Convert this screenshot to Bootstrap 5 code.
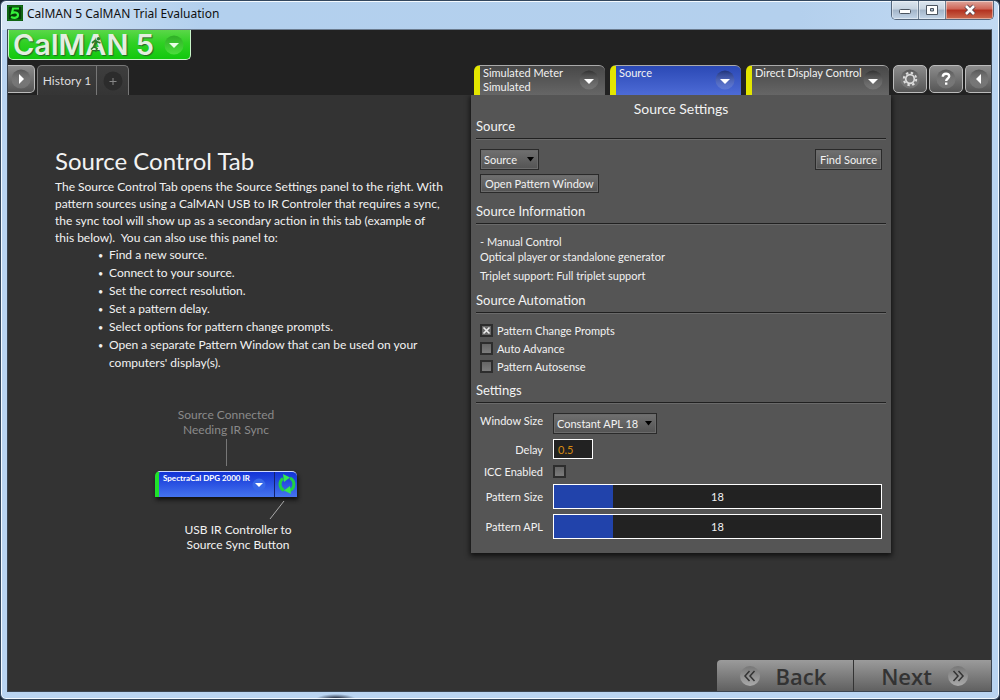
<!DOCTYPE html>
<html lang="en">
<head>
<meta charset="utf-8">
<meta name="viewport" content="width=device-width, initial-scale=1">
<title>CalMAN 5 CalMAN Trial Evaluation</title>
<link href="https://cdn.jsdelivr.net/npm/bootstrap@5.3.0/dist/css/bootstrap.min.css" rel="stylesheet">
<style>
  body { font-family: Lato, "Liberation Sans", sans-serif; font-size: 11px; line-height: 15px; color: #f2f2f2; background: #1c2634; }
  button, select, input { font: inherit; color: inherit; }
  .app-window { border: 1px solid #33475e; border-radius: 6px; padding: 0 7px 7px 6px; box-shadow: inset 0 0 0 1px #f4faff;
    background: radial-gradient(ellipse 20px 5px at 335px 100%, #3b475c 30%, transparent), linear-gradient(90deg, #d6e5f4, #b3d0ee 20%, #b4d0ed 80%, #c2daf3) 0 0 / 100% 29px no-repeat, #b9d4f1; }
  .title-bar { height: 28px; color: #101010; font-family: "Noto Sans", sans-serif; font-size: 12px; }
  .win-buttons { margin-right: -2px; border: 1px solid #55677c; border-top: 0; border-radius: 0 0 5px 5px; overflow: hidden; height: 19px; }
  .win-buttons button { width: 27px; border: 0; border-right: 1px solid #6c7d90; padding: 0; background: linear-gradient(#dce6ef, #c6d3e0 45%, #a3b5c9 50%, #c3d5e8); box-shadow: inset 0 0 0 1px #ffffff70; }
  .win-buttons .win-close { width: 47px; border-right: 0; background: linear-gradient(#dfa69c, #cf6455 45%, #b3301f 50%, #cb6a4e); }
  .client { border: 1px solid #3c4550; border-top-color: #6d7d90; background: #333; }
  .top-area { background: #222; }
  .logo-button { width: 183px; height: 30px; border: 1px solid #c9f5c9; border-top: 0; border-radius: 0 0 5px 5px; padding: 0 6px 0 4px; background: linear-gradient(#5bd749, #2fd023 45%, #11c80d); }
  .logo-text { font-family: Inter, sans-serif; font-weight: 600; font-size: 29px; line-height: 26px; color: #e4eee0; text-shadow: 1px 1px 1px #28622a; }
  .logo-text svg { position: absolute; left: 76px; top: 4px; }
  .tool-row { margin-top: 5px; height: 30px; }
  .sq-button { width: 34px; height: 28px; padding: 0; border: 1px solid #bbb; border-radius: 5px; background: linear-gradient(#8c8c8c, #555); }
  .sq-left { width: 27px; border-left: 0; border-radius: 0 5px 5px 0; }
  .sq-right { width: 26px; border-right: 0; border-radius: 5px 0 0 5px; }
  .history { margin-left: 2px; border: 1px solid #777; border-bottom: 0; border-radius: 5px 5px 0 0; background: linear-gradient(#3e3e3e, #353535); overflow: hidden; }
  .history button { border: 0; background: none; padding: 0; color: #ddd; font-size: 12px; }
  .history .hist-name { width: 58px; }
  .history .hist-add { width: 32px; border-left: 1px solid #777; }
  .device-tab { width: 131px; margin-right: 5px; border: 0; border-left: 6px solid #e3e600; border-top: 1px solid #aaa; border-radius: 6px 6px 0 0; padding: 0 6px 0 3px; background: linear-gradient(#484848, #666); text-align: left; line-height: 14px; }
  .device-tab.current { background: linear-gradient(#2b49b5, #4d6bd6); }
  .device-tab.wide { width: 143px; margin-right: 4px; }
  .tab-label { white-space: nowrap; }
  .main-area { min-height: 565px; }
  .intro { padding: 51px 0 0 47px; white-space: nowrap; font-size: 12px; line-height: 17px; }
  .intro h1 { font-size: 24px; line-height: 30px; margin: 0 0 2px; font-weight: 400; }
  .intro ul { line-height: 18px; padding-left: 54px; margin: 0; list-style: none; }
  .intro li::before { content: "•"; display: inline-block; width: 11px; margin-left: -11px; font-size: 9px; line-height: 9px; }
  .intro p { margin: 0; }
  .figure-box { width: 142px; margin: 35px 0 0 100px; line-height: 15px; font-size: 12px; }
  .figure-box svg { display: block; }
  .dim-label { color: #8a8a8a; }
  .ir-tab { height: 26px; border: 0; border-left: 4px solid #1fe12b; border-top: 1px solid #cfd8ff; border-radius: 5px 5px 0 0; background: linear-gradient(#1233d6, #4574ef); box-shadow: 1px 3px 4px #111; font-size: 8px; line-height: 12px; font-weight: 700; }
  .ir-sync { width: 23px; border-left: 1px solid #14236e; }
  .settings-panel { flex: 0 1 420px; margin-right: 100px; padding: 6px 5px 14px; background: #555; box-shadow: 0 2px 5px 1px #111; clip-path: inset(0 -8px -8px -8px); }
  .panel-title { font-size: 14px; line-height: 16px; margin: 0; font-weight: 400; }
  .group-title { font-size: 13px; line-height: 18px; margin: 0; padding-bottom: 3px; border-bottom: 1px solid #202020; box-shadow: 0 1px 0 #6a6a6a; font-weight: 400; }
  .group-body { padding: 10px 4px 9px; }
  .info-body { padding-bottom: 8px; }
  .auto-body { padding: 8px 4px 6px; }
  .flat-button, .flat-select { border: 1px solid #2a2a2a; border-radius: 0; padding: 0 4px; height: 21px; background: linear-gradient(#707070, #545454); box-shadow: inset 0 0 0 1px #6b6b6b; }
  .flat-select { appearance: none; padding: 0 3px; background: url("data:image/svg+xml,%3Csvg xmlns='http://www.w3.org/2000/svg' width='7' height='5'%3E%3Cpath d='M0 0h7L3.500 4.500z'/%3E%3C/svg%3E") right 4px center no-repeat, linear-gradient(#707070, #545454); }
  .flat-button.short { height: 19px; line-height: 17px; }
  .tick { appearance: none; width: 13px; height: 13px; margin: 0; border: 2px solid #2d2d2d; background: linear-gradient(#656565, #7c7c7c); }
  .tick:checked { background: url("data:image/svg+xml,%3Csvg xmlns='http://www.w3.org/2000/svg' width='9' height='9'%3E%3Cpath d='M1.500 1.500l6 6m0-6l-6 6' stroke='%23eee' stroke-width='1.600'/%3E%3C/svg%3E") center no-repeat, #686868; }
  .tick-row { height: 18px; }
  .settings-grid { display: grid; grid-template-columns: 63px minmax(0, 1fr); column-gap: 10px; row-gap: 5px; align-items: center; justify-items: start; }
  .settings-grid > label { justify-self: end; white-space: nowrap; }
  .settings-grid > label:first-child { align-self: start; }
  .delay-box { width: 40px; height: 20px; border: 1px solid #fff; background: #222; color: #d58a12; padding: 0 4px; }
  .bar-box { width: 100%; height: 25px; }
  .bar-box input { appearance: none; display: block; width: 100%; height: 25px; margin: 0; border: 1px solid #fff; background: linear-gradient(90deg, #2143ab var(--fill), #222 var(--fill)); }
  .bar-box input::-webkit-slider-thumb { appearance: none; width: 1px; height: 23px; background: transparent; }
  .bar-box output { position: absolute; inset: 0; display: grid; place-items: center; pointer-events: none; }
  .nav-buttons button { width: 137px; height: 31px; border: 0; padding: 0; font-family: "Open Sans", sans-serif; font-weight: 600; font-size: 22px; line-height: 28px; color: #333; background: linear-gradient(#9b9b9b, #606060); }
  .nav-buttons button:first-child { border-right: 1px solid #333; border-radius: 4px 0 0 0; }
</style>
</head>
<body>
<svg width="0" height="0" class="position-absolute" aria-hidden="true">
  <defs>
    <linearGradient id="disc" x1="0" y1="0" x2="0" y2="1"><stop offset="0" stop-color="#000" stop-opacity=".35"/><stop offset="1" stop-color="#fff" stop-opacity=".12"/></linearGradient>
    <linearGradient id="discLight" x1="0" y1="0" x2="0" y2="1"><stop offset="0" stop-color="#777"/><stop offset="1" stop-color="#aaa"/></linearGradient>
    <linearGradient id="discGreen" x1="0" y1="0" x2="0" y2="1"><stop offset="0" stop-color="#2fae26"/><stop offset="1" stop-color="#4ade3c"/></linearGradient>
    <symbol id="down" viewBox="0 0 20 20"><circle cx="10" cy="10" r="9.500" fill="url(#disc)"/><path d="M5 9h10l-5 5z" fill="#fff"/></symbol>
  </defs>
</svg>
<div class="app-window min-vh-100 d-flex flex-column">
  <header class="title-bar d-flex justify-content-between align-items-start">
    <div class="d-flex align-items-center gap-1 pt-1">
      <svg width="16" height="16"><rect width="16" height="16" fill="#063d08"/><rect x="1" y="1" width="14" height="14" fill="none" stroke="#1a8f1c"/><path d="M12 3.500H6L5 8c2-1 6-1 6 2 0 3-4 3.500-7 2" fill="none" stroke="#35f03a" stroke-width="2.200"/></svg>
      <span>CalMAN 5 CalMAN Trial Evaluation</span>
    </div>
    <div class="win-buttons d-flex">
      <button aria-label="Minimize"><svg width="14" height="14" class="d-block mx-auto"><rect x="1.500" y="6.500" width="11" height="4" rx="1" fill="#fff" stroke="#4c5560"/></svg></button>
      <button aria-label="Maximize"><svg width="14" height="14" class="d-block mx-auto"><path fill-rule="evenodd" d="M1.500 2.500h11v9h-11zM5.500 5.500h3v2.500h-3z" fill="#fff" stroke="#4c5560"/></svg></button>
      <button class="win-close" aria-label="Close"><svg width="14" height="14" class="d-block mx-auto"><path d="M3 3l8 8m0-8l-8 8" stroke="#574049" stroke-width="4.500"/><path d="M3 3l8 8m0-8l-8 8" stroke="#fff" stroke-width="2.600"/></svg></button>
    </div>
  </header>
  <div class="client flex-grow-1 d-flex flex-column">
    <div class="top-area">
      <button class="logo-button d-flex justify-content-between align-items-center">
        <span class="logo-text position-relative">CalMAN 5<svg width="14" height="17"><path d="M8.500 5L5 10.500l3 2-1.500 3.500M5 10.500L2 13.500M3 7l3-2.500 3 1.500 2.500 1" fill="none" stroke="#2d7a2c" stroke-width="1.700"/><circle cx="9.500" cy="2.800" r="1.700" fill="#2d7a2c"/></svg></span>
        <svg width="20" height="20"><circle cx="10" cy="10" r="9.500" fill="url(#discGreen)"/><path d="M5 8h10l-5 5z" fill="#e8ffe5"/></svg>
      </button>
      <div class="tool-row d-flex justify-content-between">
        <div class="d-flex">
          <button class="sq-button sq-left" aria-label="Expand"><svg width="20" height="20" class="d-block mx-auto"><circle cx="10" cy="10" r="9.500" fill="url(#disc)"/><path d="M8 5v10l5-5z" fill="#fff"/></svg></button>
          <div class="history d-flex">
            <button class="hist-name">History 1</button>
            <button class="hist-add" aria-label="Add history"><svg width="20" height="20"><circle cx="10" cy="10" r="9.500" fill="#2c2c2c"/><path d="M10 7v7M6.500 10.500h7" stroke="#888"/></svg></button>
          </div>
        </div>
        <div class="d-flex">
          <button class="device-tab d-flex justify-content-between"><span class="tab-label">Simulated Meter<br>Simulated</span><svg width="20" height="20" class="mt-1 flex-shrink-0"><use href="#down"/></svg></button>
          <button class="device-tab current d-flex justify-content-between"><span class="tab-label">Source</span><svg width="20" height="20" class="mt-1 flex-shrink-0"><use href="#down"/></svg></button>
          <button class="device-tab wide d-flex justify-content-between"><span class="tab-label">Direct Display Control</span><svg width="20" height="20" class="mt-1 flex-shrink-0"><use href="#down"/></svg></button>
          <div class="d-flex" style="gap:2px">
            <button class="sq-button" aria-label="Options"><svg width="20" height="20" class="d-block mx-auto"><circle cx="10" cy="10" r="9.500" fill="url(#disc)"/><circle cx="10" cy="10" r="4.300" fill="none" stroke="#ddd" stroke-width="1.700"/><circle cx="10" cy="10" r="6.200" fill="none" stroke="#ddd" stroke-width="2" stroke-dasharray="2.400 2.470"/></svg></button>
            <button class="sq-button" aria-label="Help"><svg width="20" height="20" class="d-block mx-auto"><circle cx="10" cy="10" r="9.500" fill="url(#disc)"/><path d="M6.800 7.800c0-4 6.400-4 6.400-.5 0 2.200-3 2.200-3 4.700M10.200 13.500v2.300" fill="none" stroke="#fff" stroke-width="2.400"/></svg></button>
            <button class="sq-button sq-right" aria-label="Collapse"><svg width="20" height="20" class="d-block mx-auto"><circle cx="10" cy="10" r="9.500" fill="url(#disc)"/><path d="M12 5v10l-5-5z" fill="#fff"/></svg></button>
          </div>
        </div>
      </div>
    </div>
    <main class="main-area d-flex justify-content-between align-items-start">
      <section class="intro">
        <h1>Source Control Tab</h1>
        <p>The Source Control Tab opens the Source Settings panel to the right. With<br>pattern sources using a CalMAN USB to IR Controler that requires a sync,<br>the sync tool will show up as a secondary action in this tab (example of<br>this below).&nbsp; You can also use this panel to:</p>
        <ul>
          <li>Find a new source.</li>
          <li>Connect to your source.</li>
          <li>Set the correct resolution.</li>
          <li>Set a pattern delay.</li>
          <li>Select options for pattern change prompts.</li>
          <li>Open a separate Pattern Window that can be used on your<br>computers' display(s).</li>
        </ul>
        <div class="figure-box text-center">
          <div class="dim-label">Source Connected<br>Needing IR Sync</div>
          <svg width="142" height="34"><path d="M71.500 2v27" stroke="#777"/></svg>
          <button class="ir-tab d-flex w-100 p-0 text-white">
            <span class="flex-grow-1 text-start ps-1">SpectraCal DPG 2000 IR</span>
            <svg width="14" height="14" class="align-self-center"><circle cx="7" cy="7" r="6.500" fill="#3767e8"/><path d="M3 5h8L7 9z" fill="#fff"/></svg>
            <span class="ir-sync ms-2 h-100"><svg width="22" height="24"><g fill="none" stroke="#20d044" stroke-width="3"><path d="M9 18.500A7 7 0 0 1 8 6.500M15 6a7 7 0 0 1 0 12.500"/></g><path d="M8 2l7 3.500L9 10zM16 22l-7-3.500 6-4.500z" fill="#35e84f"/></svg></span>
          </button>
          <svg width="142" height="25"><path d="M129 4l-14 18" stroke="#aaa"/></svg>
          <div class="ps-4 text-nowrap d-flex justify-content-center"><span>USB IR Controller to<br>Source Sync Button</span></div>
        </div>
      </section>
      <section class="settings-panel">
        <h2 class="panel-title text-center">Source Settings</h2>
        <h3 class="group-title">Source</h3>
        <div class="group-body">
          <div class="d-flex justify-content-between mb-1">
            <select class="flat-select" style="width:59px" aria-label="Source"><option>Source</option></select>
            <button class="flat-button">Find Source</button>
          </div>
          <button class="flat-button short d-block">Open Pattern Window</button>
        </div>
        <h3 class="group-title">Source Information</h3>
        <div class="group-body info-body">
          <p class="mb-1">- Manual Control<br>Optical player or standalone generator</p>
          <p class="m-0">Triplet support: Full triplet support</p>
        </div>
        <h3 class="group-title">Source Automation</h3>
        <div class="group-body auto-body">
          <div class="tick-row d-flex align-items-center gap-1"><input class="tick" type="checkbox" id="prompts" checked><label for="prompts">Pattern Change Prompts</label></div>
          <div class="tick-row d-flex align-items-center gap-1"><input class="tick" type="checkbox" id="advance"><label for="advance">Auto Advance</label></div>
          <div class="tick-row d-flex align-items-center gap-1"><input class="tick" type="checkbox" id="autosense"><label for="autosense">Pattern Autosense</label></div>
        </div>
        <h3 class="group-title">Settings</h3>
        <div class="group-body settings-grid pb-0">
          <label for="winsize">Window Size</label><select class="flat-select" id="winsize" style="width:104px"><option>Constant APL 18</option></select>
          <label for="delay">Delay</label><input class="delay-box" id="delay" type="text" value="0.5">
          <label for="icc">ICC Enabled</label><input class="tick" id="icc" type="checkbox">
          <label for="psize">Pattern Size</label><div class="bar-box position-relative"><input id="psize" type="range" value="18" style="--fill:18%"><output for="psize">18</output></div>
          <label for="papl">Pattern APL</label><div class="bar-box position-relative"><input id="papl" type="range" value="18" style="--fill:18%"><output for="papl">18</output></div>
        </div>
      </section>
    </main>
    <footer class="nav-buttons d-flex justify-content-end mt-auto">
      <button class="d-flex align-items-center justify-content-center gap-3 pe-1"><svg width="20" height="20"><circle cx="10" cy="10" r="10" fill="url(#discLight)"/><path d="M9.500 5L5 10l4.500 5M14.500 5L10 10l4.500 5" fill="none" stroke="#333" stroke-width="1.500"/></svg>Back</button>
      <button class="d-flex align-items-center justify-content-center gap-3 ps-1">Next<svg width="20" height="20"><circle cx="10" cy="10" r="10" fill="url(#discLight)"/><path d="M5.500 5l4.500 5-4.500 5M10.500 5l4.500 5-4.500 5" fill="none" stroke="#333" stroke-width="1.500"/></svg></button>
    </footer>
  </div>
</div>
<script src="https://cdn.jsdelivr.net/npm/bootstrap@5.3.0/dist/js/bootstrap.bundle.min.js"></script>
</body>
</html>
